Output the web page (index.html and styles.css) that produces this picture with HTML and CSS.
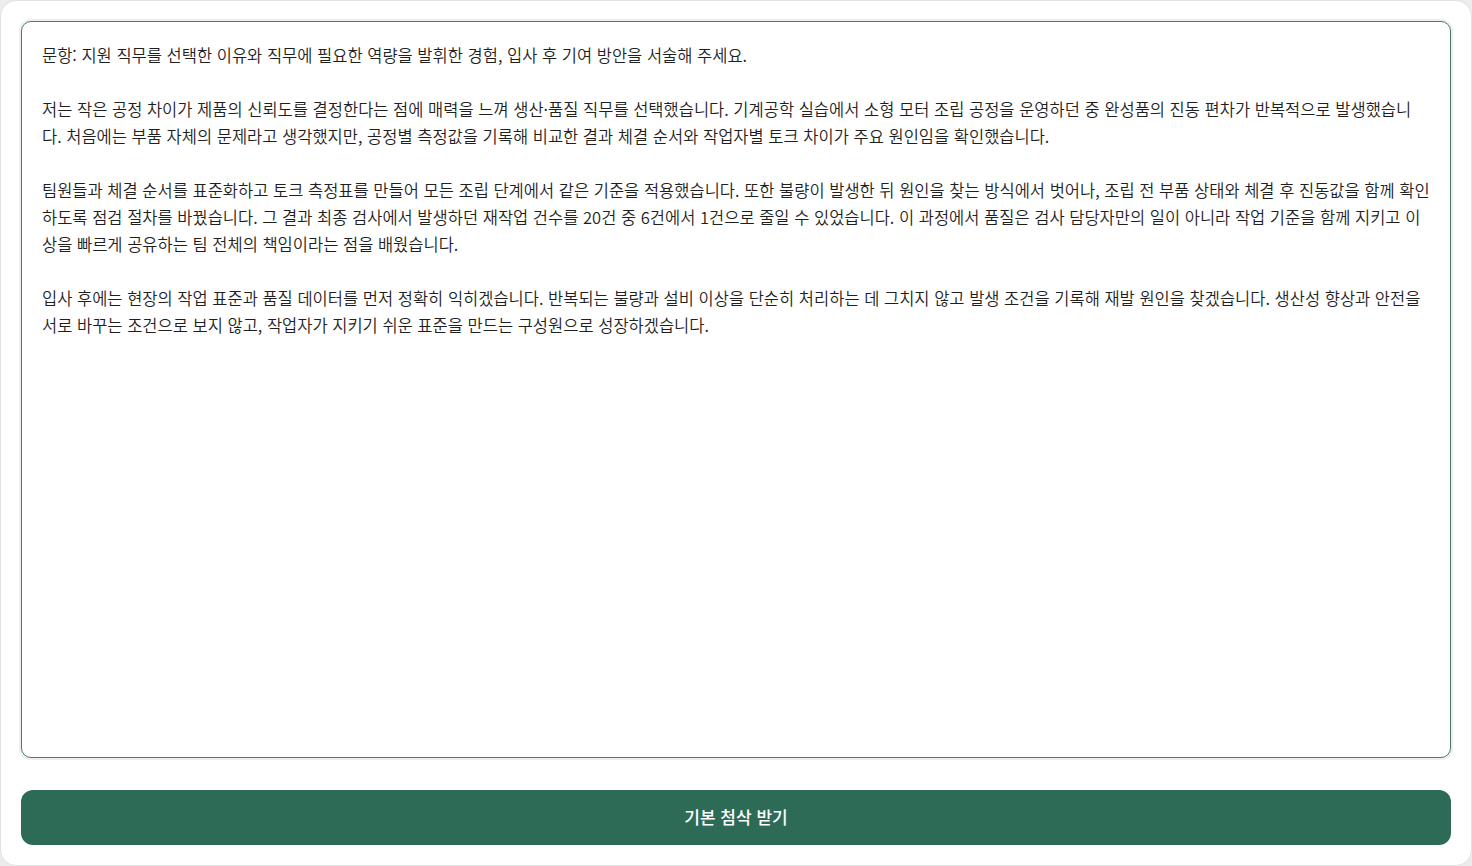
FILE: index.html
```html
<!DOCTYPE html>
<html lang="ko">
<head>
<meta charset="utf-8">
<title>자기소개서 첨삭</title>
<link rel="stylesheet" href="styles.css">
</head>
<body>
<main class="card">
<textarea class="essay" spellcheck="false">문항: 지원 직무를 선택한 이유와 직무에 필요한 역량을 발휘한 경험, 입사 후 기여 방안을 서술해 주세요.

저는 작은 공정 차이가 제품의 신뢰도를 결정한다는 점에 매력을 느껴 생산·품질 직무를 선택했습니다. 기계공학 실습에서 소형 모터 조립 공정을 운영하던 중 완성품의 진동 편차가 반복적으로 발생했습니다. 처음에는 부품 자체의 문제라고 생각했지만, 공정별 측정값을 기록해 비교한 결과 체결 순서와 작업자별 토크 차이가 주요 원인임을 확인했습니다.

팀원들과 체결 순서를 표준화하고 토크 측정표를 만들어 모든 조립 단계에서 같은 기준을 적용했습니다. 또한 불량이 발생한 뒤 원인을 찾는 방식에서 벗어나, 조립 전 부품 상태와 체결 후 진동값을 함께 확인하도록 점검 절차를 바꿨습니다. 그 결과 최종 검사에서 발생하던 재작업 건수를 20건 중 6건에서 1건으로 줄일 수 있었습니다. 이 과정에서 품질은 검사 담당자만의 일이 아니라 작업 기준을 함께 지키고 이상을 빠르게 공유하는 팀 전체의 책임이라는 점을 배웠습니다.

입사 후에는 현장의 작업 표준과 품질 데이터를 먼저 정확히 익히겠습니다. 반복되는 불량과 설비 이상을 단순히 처리하는 데 그치지 않고 발생 조건을 기록해 재발 원인을 찾겠습니다. 생산성 향상과 안전을 서로 바꾸는 조건으로 보지 않고, 작업자가 지키기 쉬운 표준을 만드는 구성원으로 성장하겠습니다.</textarea>
<button class="submit" type="button">기본 첨삭 받기</button>
</main>
</body>
</html>
```

FILE: styles.css
```css
* { box-sizing: border-box; }
html, body { margin: 0; height: 100%; }
body {
  background: #ececec;
  font-family: "Noto Sans CJK KR", "Noto Sans", sans-serif;
}
.card {
  height: 866px;
  background: #fff;
  border: 1px solid #e2e2e2;
  border-radius: 16px;
  padding: 20px;
  display: flex;
  flex-direction: column;
  gap: 32px;
}
.essay {
  flex: 1;
  width: 100%;
  resize: none;
  border: 1px solid #4f7a6a;
  border-radius: 10px;
  box-shadow: 0 0 0 2px rgba(47, 107, 88, 0.10);
  padding: 20px;
  font-family: "Noto Sans CJK KR", "Noto Sans", sans-serif;
  font-size: 16.5px;
  font-weight: 350;
  line-height: 27px;
  color: #1f1f1f;
  outline: none;
  overflow: hidden;
}
.submit {
  height: 55px;
  border: none;
  border-radius: 12px;
  background: #2e6b57;
  color: #fff;
  font-family: "Noto Sans CJK KR", "Noto Sans", sans-serif;
  font-size: 17px;
  font-weight: 500;
  line-height: 51px;
  padding: 0 0 2px;
}
```
